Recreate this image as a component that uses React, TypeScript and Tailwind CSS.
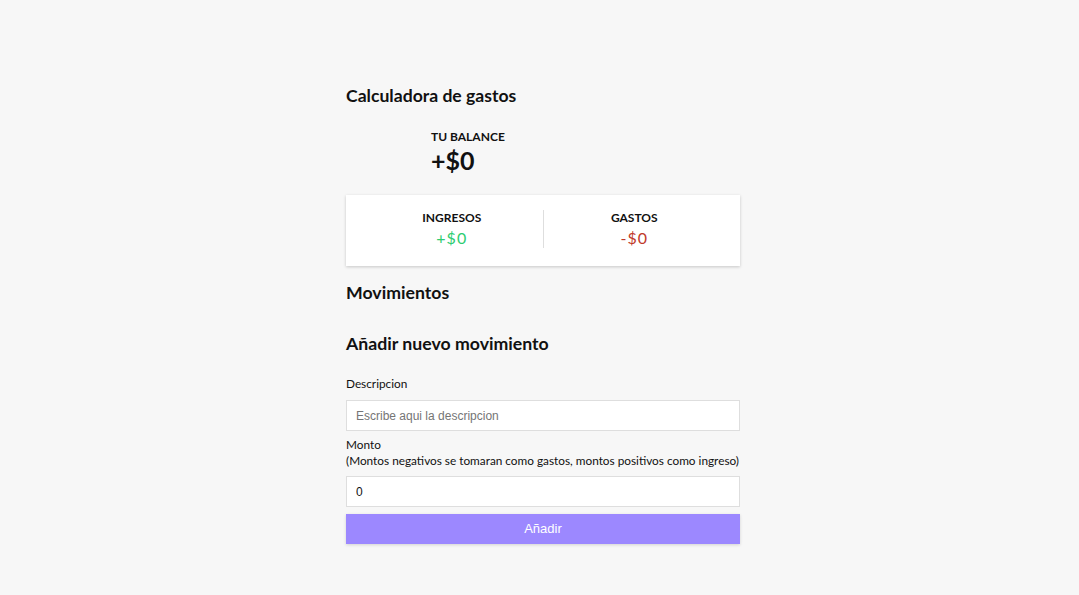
import React, { useState } from "react";

export default function App() {
  const [desc, setDesc] = useState("");
  const [amount, setAmount] = useState("0");

  return (
    <div className="min-h-screen w-full bg-[#f7f7f7] pl-[7px] font-['Lato','Liberation_Sans',sans-serif] text-[#111]">
      <div className="mx-auto w-[394px] pt-[84px]">
        <h2 className="text-[17.6px] font-bold leading-[24px]">Calculadora de gastos</h2>

        <div className="mt-[21px] pl-[85px]">
          <h4 className="text-[12px] font-bold uppercase leading-[16px]">Tu balance</h4>
          <h1 className="text-[25px] font-bold leading-[30px]">+$0</h1>
        </div>

        <div className="mt-[20px] flex bg-white px-[15px] pt-[15px] pb-[18px] shadow-[0_1px_3px_rgba(0,0,0,0.2)]">
          <div className="flex flex-1 flex-col items-center border-r border-[#dedede]">
            <h4 className="text-[12px] font-bold uppercase leading-[16px]">Ingresos</h4>
            <p className="mt-[2px] text-[16px] leading-[20px] tracking-[1px] text-[#2ecc71]">+$0</p>
          </div>
          <div className="flex flex-1 flex-col items-center">
            <h4 className="text-[12px] font-bold uppercase leading-[16px]">Gastos</h4>
            <p className="mt-[2px] text-[16px] leading-[20px] tracking-[1px] text-[#c0392b]">-$0</p>
          </div>
        </div>

        <h3 className="mt-[16px] text-[17.7px] font-bold leading-[22px]">Movimientos</h3>

        <h3 className="mt-[29px] text-[17.7px] font-bold leading-[22px]">Añadir nuevo movimiento</h3>

        <form
          className="mt-[21px]"
          onSubmit={(e) => {
            e.preventDefault();
          }}
        >
          <label className="block text-[11.8px] leading-[16px]">Descripcion</label>
          <input
            type="text"
            value={desc}
            onChange={(e) => setDesc(e.target.value)}
            placeholder="Escribe aqui la descripcion"
            className="mt-[8px] block h-[31px] w-full border border-[#dedede] bg-white px-[9px] font-['Liberation_Sans',Arial,sans-serif] text-[12px] text-[#111] placeholder:text-[#757575] outline-none"
          />
          <label className="mt-[6px] block whitespace-nowrap text-[11.8px] leading-[16px]">
            Monto
            <br />
            (Montos negativos se tomaran como gastos, montos positivos como ingreso)
          </label>
          <input
            type="number"
            value={amount}
            onChange={(e) => setAmount(e.target.value)}
            className="mt-[7px] block h-[31px] w-full border border-[#dedede] bg-white px-[9px] font-['Liberation_Sans',Arial,sans-serif] text-[12px] text-[#111] outline-none"
          />
          <button
            type="submit"
            className="mt-[7px] block h-[30px] w-full bg-[#9c88ff] font-['Liberation_Sans',Arial,sans-serif] text-[13px] text-white shadow-[0_1px_3px_rgba(0,0,0,0.15)]"
          >
            Añadir
          </button>
        </form>
      </div>
    </div>
  );
}
